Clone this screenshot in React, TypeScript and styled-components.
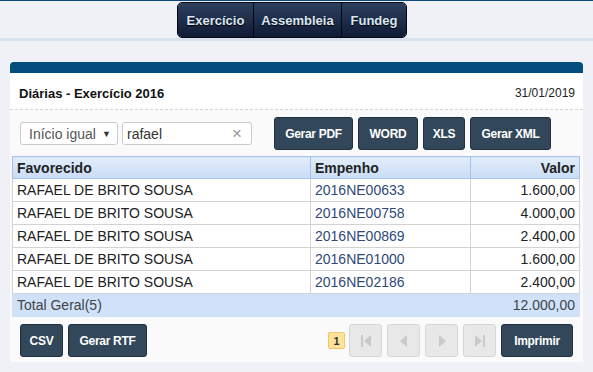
import React from 'react'
import styled, { createGlobalStyle } from 'styled-components'

const Global = createGlobalStyle`
  body {
    margin: 0;
    background: #eff1f6;
    font-family: 'Liberation Sans', Arial, sans-serif;
  }
`

const TopBar = styled.header`
  border-top: 1px solid #0b4a7b;
  height: 37px;
  border-bottom: 3px solid #d8e2ef;
  display: flex;
  justify-content: center;
`

const Nav = styled.nav`
  display: flex;
  margin-top: 1px;
  margin-left: -9px;
  height: 36px;
  border: 1px solid #05080f;
  border-radius: 5px;
  overflow: hidden;
  box-sizing: border-box;
`

const NavItem = styled.a<{ $w: number }>`
  width: ${p => p.$w}px;
  display: flex;
  align-items: center;
  justify-content: center;
  background: linear-gradient(#2c3f5e, #101b35);
  color: #dce7f4;
  font-weight: bold;
  font-size: 13px;
  text-shadow: 0 1px 1px #000;
  & + & {
    border-left: 1px solid #05080f;
  }
`

const Panel = styled.section`
  margin: 21px 10px 0 10px;
  background: #fafafa;
  border-radius: 4px 4px 0 0;
  padding-bottom: 5px;
`

const PanelBar = styled.div`
  height: 11px;
  background: #024d7d;
  border-radius: 4px 4px 0 0;
`

const TitleRow = styled.div`
  height: 36px;
  display: flex;
  align-items: center;
  justify-content: space-between;
  padding: 0 8px 0 9px;
  background: #fff;
  border-bottom: 1px dashed #d4d4d4;
`

const Title = styled.h1`
  margin: 0;
  font-size: 13px;
  font-weight: bold;
  color: #111;
  padding-top: 4px;
`

const DateText = styled.span`
  font-size: 12px;
  color: #222;
  padding-top: 3px;
`

const Toolbar = styled.div`
  display: flex;
  align-items: center;
  padding: 7px 10px 6px 10px;
`

const Select = styled.div`
  box-sizing: border-box;
  width: 98px;
  height: 23px;
  border: 1px solid #cbcbcb;
  border-radius: 3px;
  background: #fff;
  display: flex;
  align-items: center;
  justify-content: space-between;
  padding: 0 6px 0 8px;
  font-size: 14px;
  color: #555;
  span {
    font-size: 9px;
    color: #333;
  }
`

const SearchBox = styled.div`
  box-sizing: border-box;
  width: 130px;
  height: 23px;
  margin-left: 4px;
  border: 1px solid #cbcbcb;
  border-radius: 3px;
  background: #fff;
  display: flex;
  align-items: center;
  justify-content: space-between;
  padding: 0 9px 0 4px;
  font-size: 14px;
  color: #333;
  span {
    color: #999;
    font-size: 17px;
  }
`

const Button = styled.button<{ $w: number; $first?: boolean }>`
  box-sizing: border-box;
  width: ${p => p.$w}px;
  height: 33px;
  border: 1px solid #22313f;
  border-radius: 3px;
  background: #33475b;
  color: #fff;
  font-family: 'Liberation Sans', Arial, sans-serif;
  font-weight: bold;
  font-size: 12px;
  letter-spacing: -0.3px;
  padding: 0;
  margin-left: ${p => (p.$first ? 0 : 5)}px;
`

const ExportGroup = styled.div`
  display: flex;
  margin-left: 17px;
`

const Table = styled.table`
  border-collapse: collapse;
  width: 568px;
  margin: 0 0 0 2px;
  font-size: 14px;
  color: #222;
  th {
    height: 21px;
    padding: 0 4px;
    background: linear-gradient(#e2edfb, #c9dcf5);
    border: 1px solid #a6c3e8;
    text-align: left;
    font-weight: bold;
    color: #222;
  }
  td {
    height: 22px;
    padding: 0 4px;
    border: 1px solid #d3d3d3;
    background: #fff;
  }
`

const Num = styled.td`
  text-align: right;
`

const HeadNum = styled.th`
  text-align: right !important;
`

const LinkCell = styled.td`
  color: #2f4878;
`

const TotalRow = styled.tr`
  td {
    background: #cfe2fa;
    border-color: #cfe2fa;
    color: #444;
    height: 22px;
  }
`

const Footer = styled.div`
  display: flex;
  align-items: center;
  padding: 7px 10px 0 10px;
`

const Pager = styled.div`
  margin-left: auto;
  display: flex;
  align-items: center;
  gap: 5px;
`

const PageBadge = styled.span`
  box-sizing: border-box;
  width: 17px;
  height: 17px;
  border: 1px solid #f2c46c;
  border-radius: 2px;
  background: #ffe29a;
  font-size: 11px;
  font-weight: bold;
  color: #333;
  display: flex;
  align-items: center;
  justify-content: center;
  margin-right: -1px;
`

const PageButton = styled.span`
  box-sizing: border-box;
  width: 33px;
  height: 33px;
  border: 1px solid #d6d6d6;
  border-radius: 3px;
  background: #e8e8e8;
  display: flex;
  align-items: center;
  justify-content: center;
`

const PagerIcon = ({ kind }: { kind: 'first' | 'prev' | 'next' | 'last' }) => (
  <svg width="14" height="14" viewBox="0 0 14 14" fill="#c9c9c9">
    {kind === 'first' && (
      <>
        <rect x="2" y="1" width="2" height="12" />
        <path d="M12 1 L5 7 L12 13 Z" />
      </>
    )}
    {kind === 'prev' && <path d="M10 1 L3 7 L10 13 Z" />}
    {kind === 'next' && <path d="M4 1 L11 7 L4 13 Z" />}
    {kind === 'last' && (
      <>
        <path d="M2 1 L9 7 L2 13 Z" />
        <rect x="10" y="1" width="2" height="12" />
      </>
    )}
  </svg>
)

const rows = [
  ['RAFAEL DE BRITO SOUSA', '2016NE00633', '1.600,00'],
  ['RAFAEL DE BRITO SOUSA', '2016NE00758', '4.000,00'],
  ['RAFAEL DE BRITO SOUSA', '2016NE00869', '2.400,00'],
  ['RAFAEL DE BRITO SOUSA', '2016NE01000', '1.600,00'],
  ['RAFAEL DE BRITO SOUSA', '2016NE02186', '2.400,00'],
]

export default function App() {
  return (
    <>
      <Global />
      <TopBar>
        <Nav>
          <NavItem $w={75}>Exercício</NavItem>
          <NavItem $w={87}>Assembleia</NavItem>
          <NavItem $w={64}>Fundeg</NavItem>
        </Nav>
      </TopBar>
      <Panel>
        <PanelBar />
        <TitleRow>
          <Title>Diárias - Exercício 2016</Title>
          <DateText>31/01/2019</DateText>
        </TitleRow>
        <Toolbar>
          <Select>Início igual <span>▼</span></Select>
          <SearchBox>rafael <span>×</span></SearchBox>
          <ExportGroup>
            <Button $w={79}>Gerar PDF</Button>
            <Button $w={60}>WORD</Button>
            <Button $w={42}>XLS</Button>
            <Button $w={81}>Gerar XML</Button>
          </ExportGroup>
        </Toolbar>
        <Table>
          <thead>
            <tr>
              <th style={{ width: 289 }}>Favorecido</th>
              <th style={{ width: 151 }}>Empenho</th>
              <HeadNum>Valor</HeadNum>
            </tr>
          </thead>
          <tbody>
            {rows.map((r, i) => (
              <tr key={i}>
                <td>{r[0]}</td>
                <LinkCell>{r[1]}</LinkCell>
                <Num>{r[2]}</Num>
              </tr>
            ))}
            <TotalRow>
              <td>Total Geral(5)</td>
              <td />
              <Num>12.000,00</Num>
            </TotalRow>
          </tbody>
        </Table>
        <Footer>
          <Button $w={43} $first>CSV</Button>
          <Button $w={79}>Gerar RTF</Button>
          <Pager>
            <PageBadge>1</PageBadge>
            <PageButton><PagerIcon kind="first" /></PageButton>
            <PageButton><PagerIcon kind="prev" /></PageButton>
            <PageButton><PagerIcon kind="next" /></PageButton>
            <PageButton><PagerIcon kind="last" /></PageButton>
            <Button $w={72} $first>Imprimir</Button>
          </Pager>
        </Footer>
      </Panel>
    </>
  )
}
